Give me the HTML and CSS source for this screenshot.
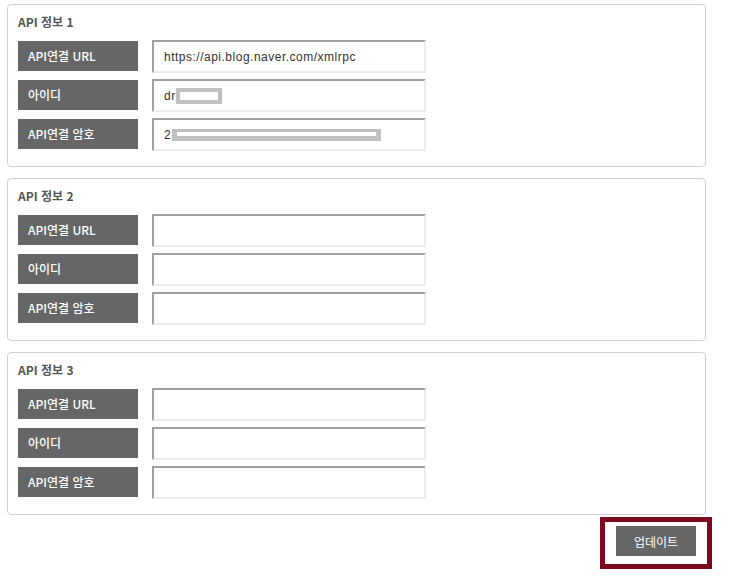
FILE: index.html
```html
<!DOCTYPE html>
<html lang="ko">
<head>
<meta charset="utf-8">
<title>API 정보</title>
<link rel="stylesheet" href="styles.css">
</head>
<body>
<div class="page">
  <section class="panel">
    <h3 class="panel-title">API 정보 1</h3>
    <div class="rows">
      <div class="row"><div class="label">API연결 URL</div><div class="field">https://api.blog.naver.com/xmlrpc</div></div>
      <div class="row"><div class="label">아이디</div><div class="field">dr<span class="redact redact-short"></span></div></div>
      <div class="row"><div class="label">API연결 암호</div><div class="field">2<span class="redact redact-long"></span></div></div>
    </div>
  </section>
  <section class="panel">
    <h3 class="panel-title">API 정보 2</h3>
    <div class="rows">
      <div class="row"><div class="label">API연결 URL</div><div class="field"></div></div>
      <div class="row"><div class="label">아이디</div><div class="field"></div></div>
      <div class="row"><div class="label">API연결 암호</div><div class="field"></div></div>
    </div>
  </section>
  <section class="panel">
    <h3 class="panel-title">API 정보 3</h3>
    <div class="rows">
      <div class="row"><div class="label">API연결 URL</div><div class="field"></div></div>
      <div class="row"><div class="label">아이디</div><div class="field"></div></div>
      <div class="row"><div class="label">API연결 암호</div><div class="field"></div></div>
    </div>
  </section>
  <div class="actions">
    <div class="highlight"><button class="btn" type="button">업데이트</button></div>
  </div>
</div>
</body>
</html>
```

FILE: styles.css
```css
* { box-sizing: border-box; }
html, body { margin: 0; padding: 0; background: #fff; }
body {
  font-family: "Liberation Sans", "Noto Sans CJK KR", sans-serif;
  font-size: 12px;
  color: #333;
}
.page {
  padding: 4px 0 0 7px;
  width: 729px;
}
.panel {
  width: 699px;
  height: 163px;
  border: 1px solid #d0d0d0;
  border-radius: 4px;
  padding: 9px 10px 15px 10px;
  margin-bottom: 11px;
  background: #fff;
}
.panel:nth-of-type(3) { margin-bottom: 2px; }
.panel-title {
  margin: 0 0 10px 0;
  font-size: 12px;
  line-height: 16px;
  font-weight: bold;
  color: #555;
  font-family: "Noto Sans CJK KR", "Liberation Sans", sans-serif;
}
.rows {
  display: flex;
  flex-direction: column;
  gap: 6px;
}
.row {
  display: flex;
  align-items: flex-start;
  gap: 14px;
  height: 33px;
}
.label {
  width: 120px;
  height: 30px;
  margin-top: 1px;
  background: #666;
  color: #fff;
  font-family: "Noto Sans CJK KR", "Liberation Sans", sans-serif;
  font-size: 12px;
  font-weight: 500;
  line-height: 29px;
  padding-left: 10px;
}
.field {
  width: 274px;
  height: 33px;
  border-top: 2px solid #a0a0a0;
  border-left: 2px solid #a0a0a0;
  border-right: 2px solid #ececec;
  border-bottom: 2px solid #ececec;
  padding-left: 10px;
  display: flex;
  align-items: center;
  font-size: 12px;
  letter-spacing: 0.5px;
  color: #333;
  white-space: nowrap;
}
.redact {
  display: inline-block;
  background: #fff;
  border: 4px solid #c0c0c0;
}
.redact-short { width: 46px; height: 16px; margin-left: 0; }
.redact-long { width: 209px; height: 12px; border-width: 3px 5px 5px 5px; margin-left: 1px; }
.actions {
  width: 712px;
  display: flex;
  justify-content: flex-end;
  padding-right: 7px;
}
.highlight {
  border: 5px solid #7d0a1e;
  padding: 4px 11px 8px 11px;
}
.btn {
  width: 80px;
  height: 30px;
  border: none;
  background: #666;
  color: #fff;
  font-family: "Noto Sans CJK KR", sans-serif;
  font-size: 12px;
  padding: 0;
  display: block;
}
```
